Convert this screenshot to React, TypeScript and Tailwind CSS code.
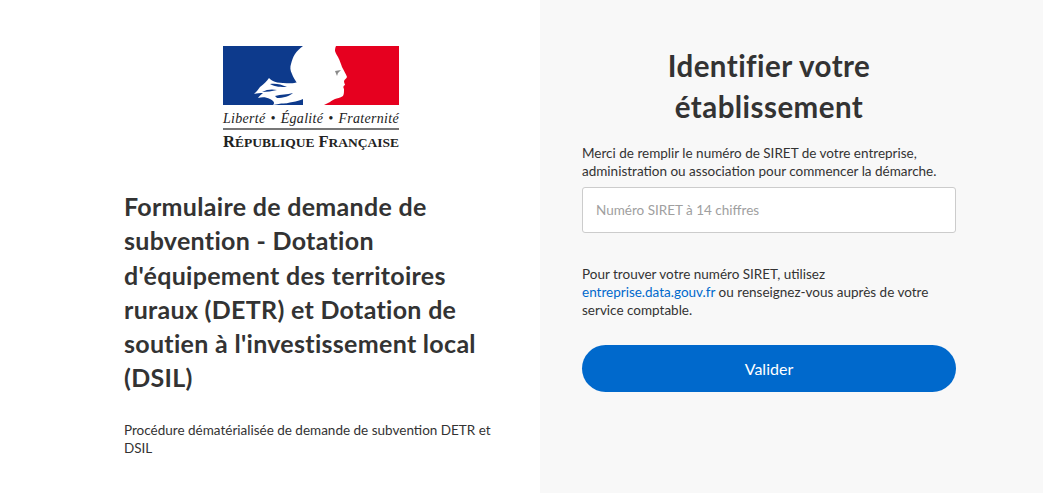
const font = { fontFamily: "Lato, 'Noto Sans', sans-serif" };
const serif = { fontFamily: "'Liberation Serif', serif" };

function RepublicLogo() {
  return (
    <div className="w-[176px] text-[#222222]" style={serif}>
      <svg width="176" height="59" viewBox="0 0 176 59" className="block">
        <rect x="0" y="0" width="90" height="59" fill="#0d3a8c" />
        <rect x="100" y="0" width="76" height="59" fill="#e6001f" />
        {/* marianne */}
        <path
          d="M80 0 L113 0 C112 2 112 4 112 5 C113 8 114 9 115 11 C117 15 118 18 119 21 C121 25 123 28 124 31 C123 33 122 33 121 35 C121 37 122 38 122 39 C120 40 120 41 121 43 C121 46 121 48 120 50 C117 52 114 52 112 53 C110 54 108 55 107 56 C105 57 103 58 101 59 L80 59 C80 52 78 44 74 37 C72 34 70 31 69 28 C67 24 67 21 68 18 C69 14 70 11 72 8 C74 5 77 2 80 0 Z"
          fill="#ffffff"
        />
        <path
          d="M75 36 C70 38 65 37 60 37 C56 37 52 36 50 35 C48 34 47 33 46 32 C44 35 41 38 37 41 C35 44 33 46 31 48 C34 47 37 47 40 47 C38 49 36 50 35 52 C39 51 43 51 47 53 C51 55 52 57 50 59 C56 58 60 57 64 58 C70 59 76 59 82 59 L84 44 Z"
          fill="#ffffff"
        />
        <path d="M47 38 C52 37 58 38 64 41 C58 41 52 41 47 38 Z" fill="#0d3a8c" />
        <path d="M39 46 C44 43 50 43 54 44 C49 45 44 46 39 46 Z" fill="#0d3a8c" />
        <path d="M52 50 C58 48 64 49 70 47 C67 50 60 52 54 52 Z" fill="#0d3a8c" />
        <path d="M58 59 C66 56 74 56 80 53 C80 55 80 57 80 59 Z" fill="#0d3a8c" />
        <path d="M112 25 L118 24 L115 27 L114 30 Z" fill="#8a8a8a" />
      </svg>
      <div className="mt-[6px] flex h-[15px] items-center justify-between text-[14px] italic leading-[15px] tracking-[0.3px]">
        <span>Liberté</span>
        <span>•</span>
        <span>Égalité</span>
        <span>•</span>
        <span>Fraternité</span>
      </div>
      <div className="mt-[2px] h-[2px] bg-[#777777]" />
      <div className="mt-[3px] flex h-[17px] items-baseline justify-between text-[16.5px] font-bold leading-[17px]">
        <span>
          R<span className="text-[13.5px]">ÉPUBLIQUE</span>
        </span>
        <span>
          F<span className="text-[13.5px]">RANÇAISE</span>
        </span>
      </div>
    </div>
  );
}

export default function App() {
  return (
    <div className="flex h-[493px] w-full overflow-hidden text-[#333333]" style={font}>
      <section className="w-[540px] shrink-0 bg-white pl-[124px] pr-[40px] pt-[46px]">
        <div className="ml-[99px]">
          <RepublicLogo />
        </div>
        <h1 className="mt-[39px] text-[25px] font-bold leading-[34.3px] tracking-[0.3px]">
          Formulaire de demande de
          <br />
          subvention - Dotation
          <br />
          d'équipement des territoires
          <br />
          ruraux (DETR) et Dotation de
          <br />
          soutien à l'investissement local
          <br />
          (DSIL)
        </h1>
        <p className="mt-[26px] text-[13.5px] leading-[18px]">
          Procédure dématérialisée de demande de subvention DETR et
          <br />
          DSIL
        </p>
      </section>

      <section className="flex-1 bg-[#f8f8f8] pl-[42px] pt-[45px]">
        <div className="w-[374px]">
          <h2 className="text-center text-[29.5px] font-bold leading-[41px] tracking-[0.45px]">
            Identifier votre
            <br />
            établissement
          </h2>
          <p className="mt-[17px] text-[13.5px] leading-[18px]">
            Merci de remplir le numéro de SIRET de votre entreprise,
            <br />
            administration ou association pour commencer la démarche.
          </p>
          <input
            type="text"
            placeholder="Numéro SIRET à 14 chiffres"
            className="mt-[7px] block h-[46px] w-full rounded-[3px] border border-[#cccccc] bg-white px-[13px] text-[13.5px] outline-none placeholder:text-[#a0a0a0]"
          />
          <p className="mt-[32px] text-[13.5px] leading-[18px]">
            Pour trouver votre numéro SIRET, utilisez
            <br />
            <a href="#" className="text-[#0069cc]">
              entreprise.data.gouv.fr
            </a>{" "}
            ou renseignez-vous auprès de votre
            <br />
            service comptable.
          </p>
          <button
            type="button"
            className="mt-[26px] block h-[47px] w-full rounded-full bg-[#0069cc] text-[16px] text-white"
          >
            Valider
          </button>
        </div>
      </section>
    </div>
  );
}
